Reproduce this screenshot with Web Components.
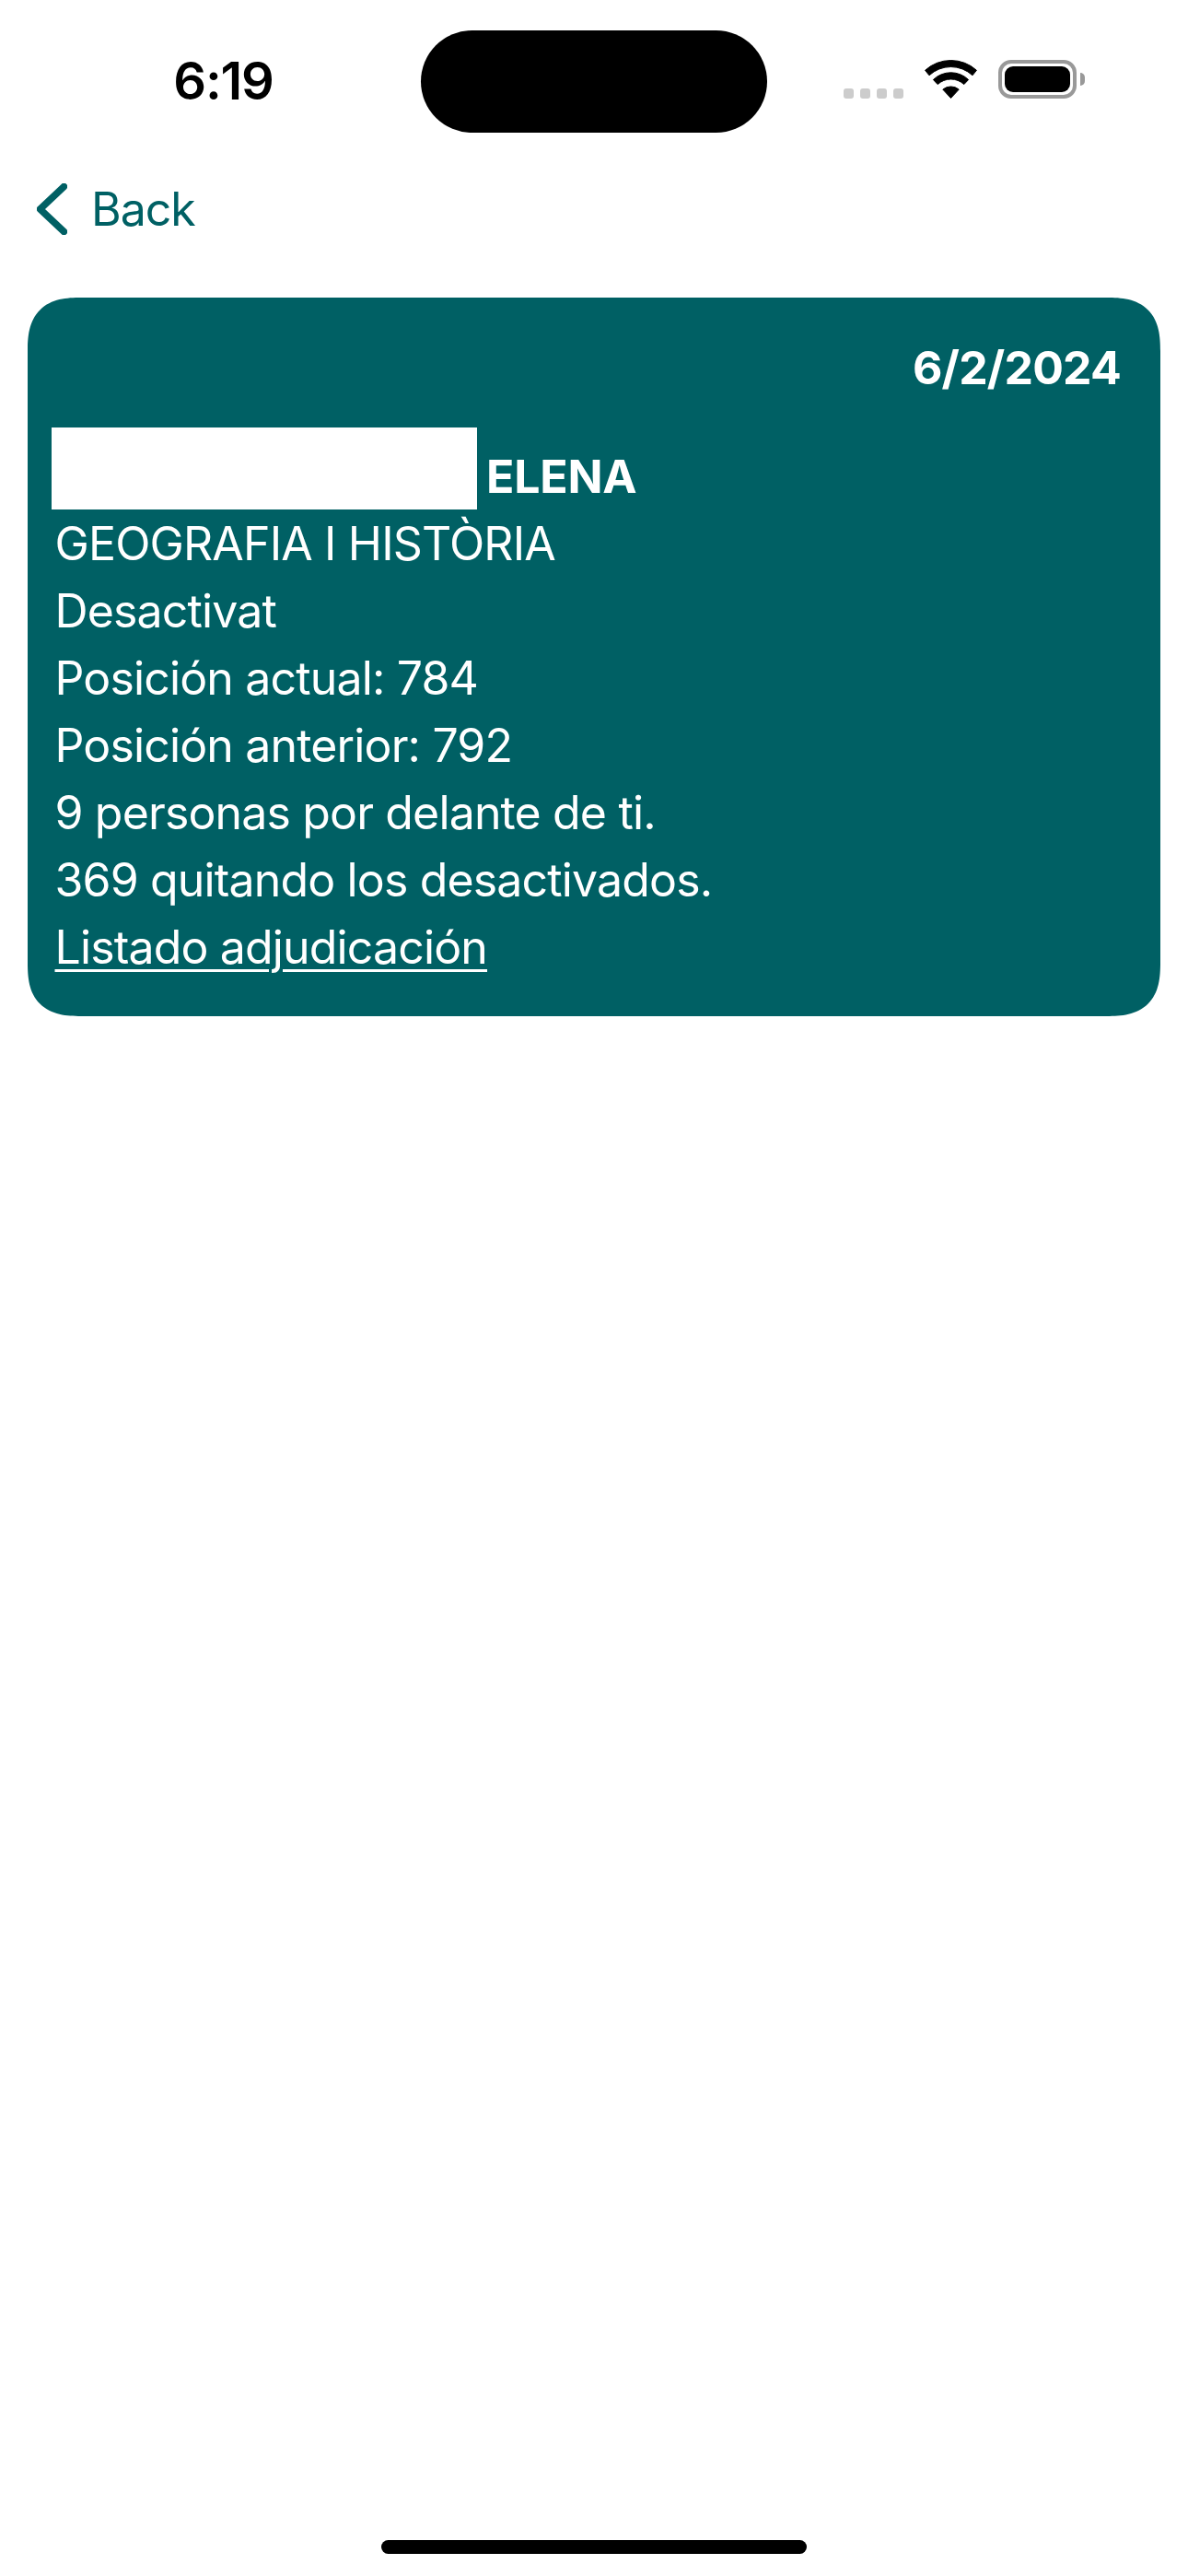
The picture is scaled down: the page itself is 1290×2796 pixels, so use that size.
<!DOCTYPE html>
<html lang="es"><head><meta charset="utf-8"><title>Posición</title>
<style>
html,body{margin:0;background:#fff;font-family:Inter,"Liberation Sans",sans-serif}
body{min-height:2796px;display:flex;flex-direction:column}
</style></head><body>
<status-bar></status-bar>
<nav-back>Back</nav-back>
<result-card date="6/2/2024" name="ELENA">
<card-line>GEOGRAFIA I HISTÒRIA</card-line>
<card-line>Desactivat</card-line>
<card-line>Posición actual: 784</card-line>
<card-line>Posición anterior: 792</card-line>
<card-line>9 personas por delante de ti.</card-line>
<card-line>369 quitando los desactivados.</card-line>
<card-line link>Listado adjudicación</card-line>
</result-card>
<home-indicator></home-indicator>
<script>
function def(name,html){customElements.define(name,class extends HTMLElement{
 constructor(){super();this.attachShadow({mode:'open'}).innerHTML=typeof html==='function'?html(this):html}
})}
def('status-bar',`<style>
:host{display:flex;height:144px;padding-top:33px;box-sizing:border-box;align-items:flex-start;color:#000}
.l{width:457px;padding-left:28px;box-sizing:border-box;text-align:center;font:600 56px/111px Inter,sans-serif;letter-spacing:-1.2px}
.island{width:376px;height:111px;border-radius:56px;background:#000}
.r{display:flex;align-items:flex-end;margin:32px 0 0 83px;height:42px}
.dots{display:flex;gap:7px;margin-right:23px}
.dots i{width:11px;height:11px;border-radius:3px;background:#ccc}
svg{display:block}
.bat{width:85px;height:42px;box-sizing:border-box;border:4px solid #999;border-radius:14px;padding:3px;margin-left:23px}
.bat b{display:block;height:100%;background:#000;border-radius:9px}
.nub{width:5px;height:14px;margin:0 0 14px 4px;background:#999;border-radius:0 7px 7px 0}
</style><div class="l">6:19</div><div class="island"></div><div class="r">
<div class="dots"><i></i><i></i><i></i><i></i></div>
<svg width="57" height="42" viewBox="0 0 57 42" fill="#000" stroke="#000" stroke-width="1" stroke-linejoin="round"><path d="M.6 11.3A41.5 41.5 0 0 1 56.4 11.3L52 16.8A34.5 34.5 0 0 0 5 16.8Z"/><path d="M9.4 21.5A27.5 27.5 0 0 1 47.6 21.5L42.8 26.6A21 21 0 0 0 14.2 26.6Z"/><path d="M19.8 32.1A13.5 13.5 0 0 1 37.2 32.1L28.5 41.5Z"/></svg>
<div class="bat"><b></b></div><div class="nub"></div></div>`);
def('nav-back',`<style>
:host{display:flex;align-items:center;gap:26px;height:126px;margin-top:20px;padding-left:40px;color:#006064;font:400 50px/1 Inter,sans-serif;letter-spacing:-1px}
svg{display:block}
</style><svg width="33" height="56" viewBox="0 0 33 56" fill="none" stroke="#006064" stroke-width="7.5" stroke-linecap="round" stroke-linejoin="round"><path d="M29.5 3.5L3.5 28L29.5 52.5"/></svg><slot></slot>`);
def('card-line',`<style>
:host{display:block;padding-left:3.5px;font:400 50px/73px Inter,sans-serif;letter-spacing:-.85px;color:#fff;white-space:nowrap}
:host([link]) span{text-decoration:underline;text-decoration-thickness:3px;text-underline-offset:6px}
</style><span><slot></slot></span>`);
def('result-card',el=>`<style>
:host{display:block;margin:33px 30px 0;padding:40px 43px 38px 26px;background:#006064;border-radius:58px;corner-shape:superellipse(1.4);color:#fff;font-family:Inter,sans-serif}
.date{text-align:right;font:700 50px/73px Inter,sans-serif;letter-spacing:-.8px}
.name{display:flex;align-items:flex-end;gap:10px;margin:28px 0 1px;font:700 50px/71px Inter,sans-serif;letter-spacing:-.2px}
.redact{width:462px;height:89px;background:#fff}
</style><div class="date">${el.getAttribute('date')||''}</div>
<div class="name"><div class="redact"></div><span>${el.getAttribute('name')||''}</span></div><slot></slot>`);
def('home-indicator',`<style>
:host{display:block;margin-top:auto;padding-bottom:24px}
div{width:462px;height:15px;margin:0 auto;border-radius:8px;background:#000}
</style><div></div>`);
</script>
</body></html>
